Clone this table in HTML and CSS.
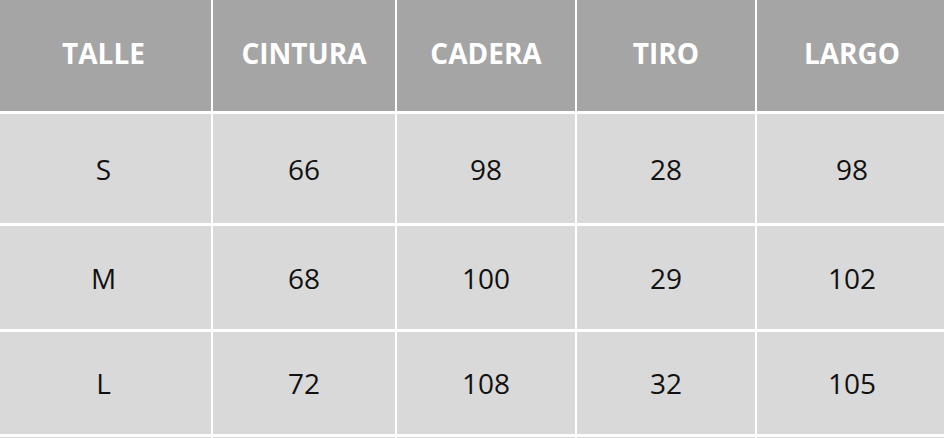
FILE: index.html
```html
<!DOCTYPE html>
<html lang="es">
<head>
<meta charset="utf-8">
<title>Tabla de talles</title>
<link rel="stylesheet" href="styles.css">
</head>
<body>
<div class="size-table">
  <div class="cell head first">TALLE</div>
  <div class="cell head">CINTURA</div>
  <div class="cell head">CADERA</div>
  <div class="cell head">TIRO</div>
  <div class="cell head last">LARGO</div>

  <div class="cell first">S</div>
  <div class="cell">66</div>
  <div class="cell">98</div>
  <div class="cell">28</div>
  <div class="cell last">98</div>

  <div class="cell first">M</div>
  <div class="cell">68</div>
  <div class="cell">100</div>
  <div class="cell">29</div>
  <div class="cell last">102</div>

  <div class="cell first">L</div>
  <div class="cell">72</div>
  <div class="cell">108</div>
  <div class="cell">32</div>
  <div class="cell last">105</div>

  <div class="cell first"></div>
  <div class="cell"></div>
  <div class="cell"></div>
  <div class="cell"></div>
  <div class="cell last"></div>
</div>
</body>
</html>
```

FILE: styles.css
```css
html, body {
  margin: 0;
  padding: 0;
  background: #ffffff;
  overflow: hidden;
}

body {
  font-family: "Open Sans", "Liberation Sans", sans-serif;
}

.size-table {
  display: grid;
  grid-template-columns: 211px 182px 178px 178px 1fr;
  grid-template-rows: 111px 109px 103px 102px 100px;
  column-gap: 2px;
  row-gap: 3px;
  width: 944px;
}

.cell {
  display: flex;
  align-items: center;
  justify-content: center;
  background: #d9d9d9;
  color: #111111;
  font-size: 28px;
  font-weight: 400;
}

.cell.first {
  padding-right: 4px;
}

.cell.last {
  padding-left: 3px;
}

.cell.head {
  background: #a5a5a5;
  color: #ffffff;
  font-weight: 700;
  font-size: 28px;
  padding-bottom: 5px;
}
```
